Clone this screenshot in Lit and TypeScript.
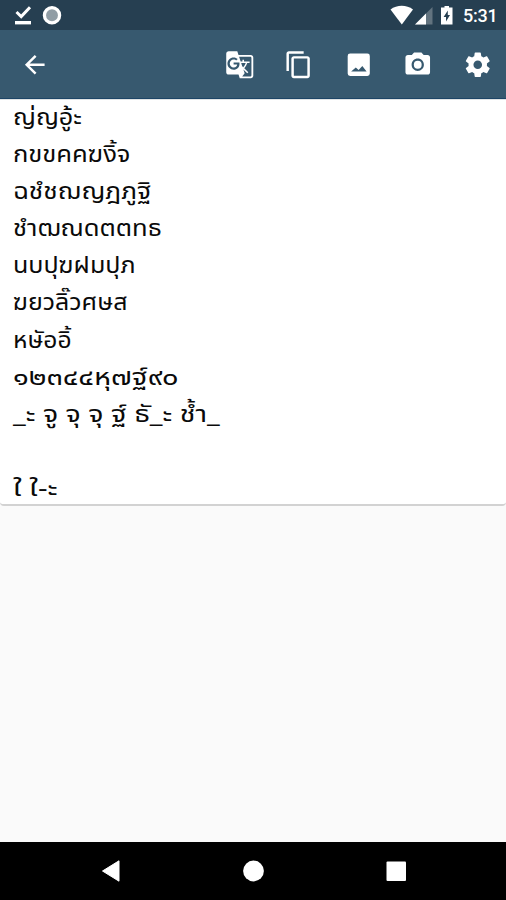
import { LitElement, html, css, svg } from "lit";
import { customElement } from "lit/decorators.js";

// Text rows with the width each one takes in the card, in px.
const ROWS: { text: string; width: number }[] = [
  { text: "ญ่ญอู้ะ", width: 69 },
  { text: "กขขคคฆงิ้จ", width: 118 },
  { text: "ฉชํชฌญฎภูฐิ", width: 138 },
  { text: "ชำฒณดตตทธ", width: 149 },
  { text: "นบปุฆฝมปุภ", width: 123 },
  { text: "ฆยวลิ๊วศษส", width: 115 },
  { text: "หษัออิ้", width: 59 },
  { text: "๑๒๓๔๔หุ๗ฐ์๙๐", width: 165 },
  { text: "_ะ จู จุ จุ ฐ์ ธั_ะ ช้ำ_", width: 207 },
  { text: "", width: 0 },
  { text: "ใ ใ-ะ", width: 44 },
];

const BACK = svg`<path d="M20 11H7.83l5.59-5.59L12 4l-8 8 8 8 1.41-1.41L7.83 13H20v-2z"/>`;
const ACTIONS = [
  svg`<path d="M21 4H11l-1-3H3c-1.1 0-2 .9-2 2v15c0 1.1.9 2 2 2h8l1 3h9c1.1 0 2-.9 2-2V6c0-1.1-.9-2-2-2zM7 16c-2.76 0-5-2.24-5-5s2.24-5 5-5c1.35 0 2.48.5 3.35 1.3L9.03 8.57c-.38-.36-1.04-.78-2.03-.78-1.74 0-3.15 1.44-3.15 3.21S5.26 14.21 7 14.21c2.01 0 2.84-1.44 2.92-2.41H7v-1.71h4.68c.07.31.12.61.12 1.02C11.8 13.97 9.89 16 7 16zm6.17-5.42h3.7c-.43 1.25-1.11 2.43-2.05 3.47-.31-.35-.6-.72-.86-1.1l-.79-2.37zm8.33 9.92c0 .55-.45 1-1 1H14l2-2.5-1.04-3.1 3.1 3.1.92-.92-3.3-3.25.02-.02c1.13-1.25 1.93-2.69 2.4-4.22H20v-1.3h-4.53V8h-1.29v1.29h-1.44L11.46 5.5h9.04c.55 0 1 .45 1 1v14z"/>`,
  svg`<path d="M16 1H4c-1.1 0-2 .9-2 2v14h2V3h12V1zm3 4H8c-1.1 0-2 .9-2 2v14c0 1.1.9 2 2 2h11c1.1 0 2-.9 2-2V7c0-1.1-.9-2-2-2zm0 16H8V7h11v14z"/>`,
  svg`<path fill-rule="evenodd" d="M5 2.8h14a2 2 0 0 1 2 2v14.400a2 2 0 0 1-2 2H5a2 2 0 0 1-2-2V4.800a2 2 0 0 1 2-2zM5.800 17.500h12.600l-3.500-4.500-3 3.300-2.300-2z"/>`,
  svg`<circle cx="12" cy="12" r="3.2"/><path d="M9 2L7.170 4H4c-1.100 0-2 .9-2 2v12c0 1.100.9 2 2 2h16c1.100 0 2-.9 2-2V6c0-1.100-.9-2-2-2h-3.170L15 2H9zm3 15c-2.760 0-5-2.240-5-5s2.240-5 5-5 5 2.240 5 5-2.240 5-5 5z"/>`,
  svg`<path d="M19.430 12.980c.04-.32.07-.64.07-.98s-.03-.66-.07-.98l2.110-1.650c.19-.15.24-.42.12-.64l-2-3.460c-.12-.22-.39-.3-.61-.22l-2.490 1c-.52-.4-1.080-.73-1.690-.98l-.38-2.650C14.460 2.180 14.250 2 14 2h-4c-.25 0-.46.18-.49.42l-.38 2.650c-.61.25-1.170.59-1.690.98l-2.490-1c-.23-.09-.49 0-.61.22l-2 3.460c-.13.22-.07.49.12.64l2.110 1.650c-.04.32-.07.65-.07.98s.03.66.07.98l-2.110 1.650c-.19.15-.24.42-.12.64l2 3.460c.12.22.39.3.61.22l2.490-1c.52.4 1.080.73 1.690.98l.38 2.650c.03.24.24.42.49.42h4c.25 0 .46-.18.49-.42l.38-2.650c.61-.25 1.170-.59 1.690-.98l2.490 1c.23.09.49 0 .61-.22l2-3.460c.12-.22.07-.49-.12-.64l-2.110-1.650zM12 15.500c-1.930 0-3.500-1.570-3.500-3.500s1.570-3.500 3.500-3.500 3.500 1.570 3.500 3.500-1.570 3.500-3.500 3.500z"/>`,
];

@customElement("app-root")
export class AppRoot extends LitElement {
  static styles = css`
    :host { display: flex; flex-direction: column; height: 900px; width: 506px;
      background: #fafafa; overflow: hidden; color: #0a0a0a;
      font-family: "Noto Sans Thai", "Noto Sans Thai Looped", "Noto Sans", sans-serif; }
    svg { display: block; fill: #fff; flex: none; }
    .status { height: 30px; background: #263f51; display: flex; align-items: center;
      justify-content: space-between; flex: none; box-sizing: border-box; padding: 0 10px 0 14px; }
    .group { display: flex; align-items: center; height: 30px; }
    .time { font: 500 18px/30px Roboto, sans-serif; color: #fff; width: 33px; white-space: nowrap;
      letter-spacing: -0.2px; padding-top: 1px; }
    .bar { height: 69px; flex: none; background: #37596f; display: flex; align-items: center;
      justify-content: space-between; box-sizing: border-box; padding: 2px 14px 0 20px;
      border-bottom: 1.500px solid #1d4566; }
    .actions { display: flex; gap: 30px; }
    .card { height: 407px; flex: none; background: #fff; border-bottom: 2px solid #d2d2d2;
      border-top: 1px solid #e0e4e5; border-radius: 0 0 4px 4px; box-sizing: border-box;
      padding: 0 13px; }
    .row { height: 37.100px; line-height: 37px; font-size: 23px; white-space: pre; }
    .run { display: inline-block; transform-origin: 0 50%; }
    .space { flex: 1; }
    .nav { height: 58px; background: #000; display: flex; justify-content: center; gap: 122px;
      align-items: center; flex: none; }
  `;

  async firstUpdated() {
    await document.fonts.ready;
    this.renderRoot.querySelectorAll<HTMLElement>(".run").forEach((el, i) => {
      const natural = el.offsetWidth;
      if (natural) el.style.transform = `scaleX(${ROWS[i].width / natural})`;
    });
  }

  render() {
    return html`
      <div class="status">
        <div class="group">
          <svg width="49" height="30" viewBox="0 0 49 30">
            <path d="M2.500 12l4.700 4.500 8.800-9.300" fill="none" stroke="#fff" stroke-width="3"/>
            <path d="M1 21h16v3.400H1z"/>
            <circle cx="38" cy="15.300" r="7.600" fill="#909da5" stroke="#fff" stroke-width="3.300"/>
          </svg>
        </div>
        <div class="group">
          <svg width="73" height="30" viewBox="0 0 73 30">
            <path d="M.5 9.500C7 4.500 16.500 4.500 23 9.500L11.800 24.500z"/>
            <path d="M42.500 7v17.500H25z" fill="#62737f"/><path d="M36 13.500v11H25z"/>
            <path fill-rule="evenodd" d="M54.500 6h4.500v1.500h3.500v17h-11.500V7.500H54.500zM57.800 10.500l-4.200 6.500H56v4.500l4-6.500h-2.200z"/>
          </svg>
          <div class="time">5:31</div>
        </div>
      </div>
      <div class="bar">
        <svg width="29.500" height="29.500" viewBox="0 0 24 24">${BACK}</svg>
        <div class="actions">
          ${ACTIONS.map((a) => html`<svg width="29.500" height="29.500" viewBox="0 0 24 24">${a}</svg>`)}
        </div>
      </div>
      <div class="card">
        ${ROWS.map((r) => html`<div class="row"><span class="run">${r.text}</span></div>`)}
      </div>
      <div class="space"></div>
      <div class="nav">
        <svg width="21" height="22" viewBox="0 0 21 22"><path d="M2.500 11L19 .8v20.400z" stroke="#fff" stroke-linejoin="round"/></svg>
        <svg width="21" height="22" viewBox="0 0 21 22"><circle cx="10.500" cy="11" r="10.400"/></svg>
        <svg width="21" height="22" viewBox="0 0 21 22"><rect x=".5" y="1.500" width="19.500" height="19.500" rx="1"/></svg>
      </div>
    `;
  }
}
